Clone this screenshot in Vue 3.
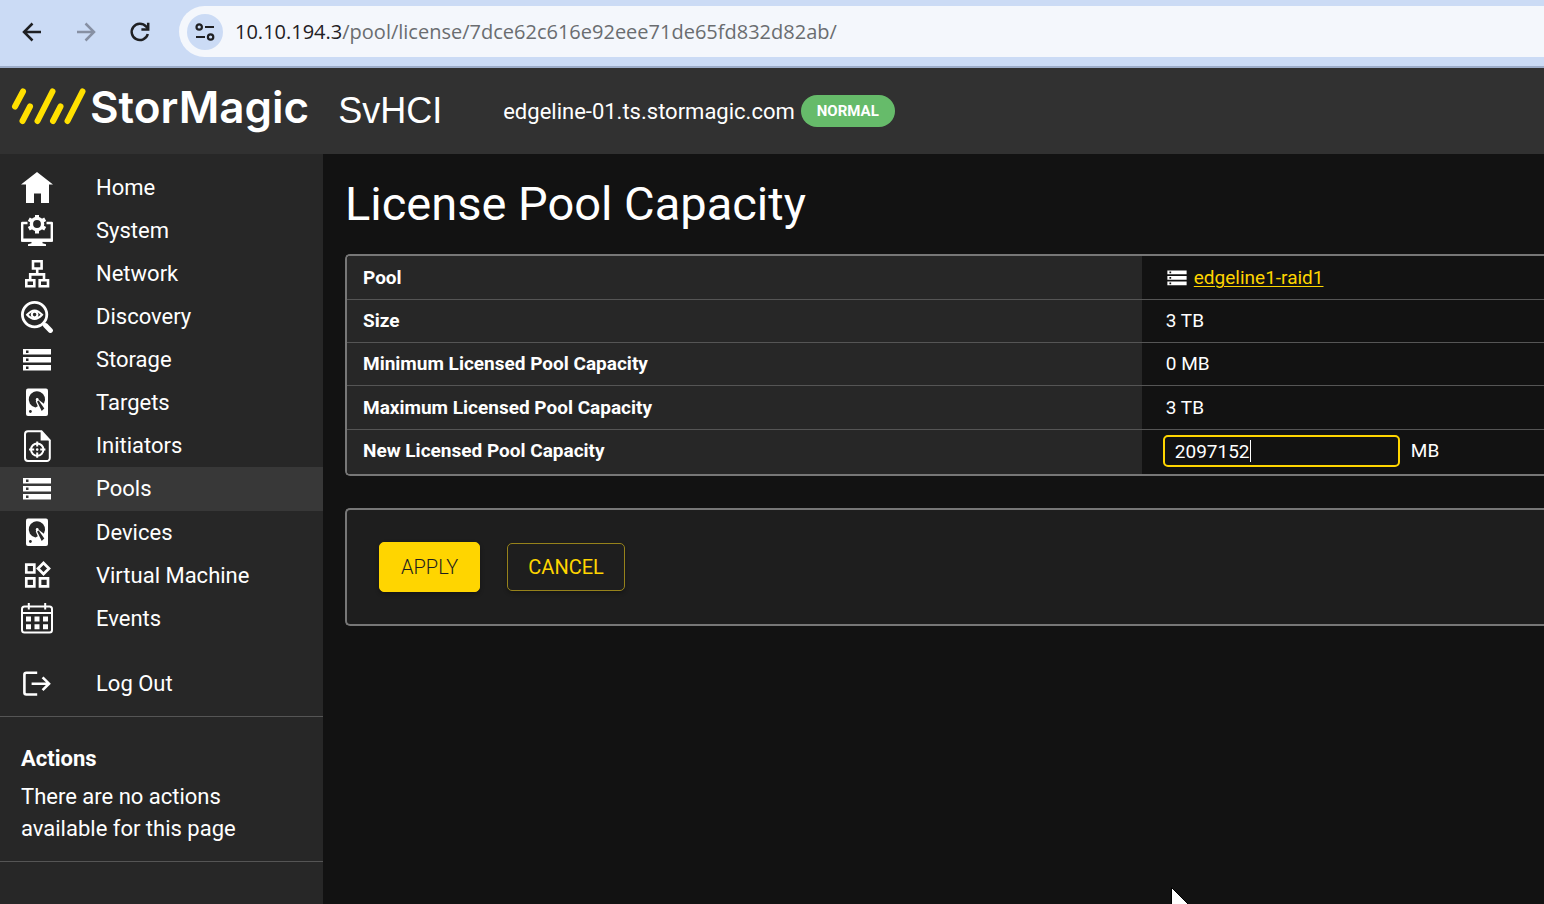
<script setup>
import { ref } from 'vue'

const capacity = ref('2097152')

const nav = [
  { label: 'Home', icon: 'home' },
  { label: 'System', icon: 'system' },
  { label: 'Network', icon: 'network' },
  { label: 'Discovery', icon: 'discovery' },
  { label: 'Storage', icon: 'storage' },
  { label: 'Targets', icon: 'disk' },
  { label: 'Initiators', icon: 'initiator' },
  { label: 'Pools', icon: 'storage', active: true },
  { label: 'Devices', icon: 'disk' },
  { label: 'Virtual Machine', icon: 'widgets' },
  { label: 'Events', icon: 'events' },
  { label: 'Log Out', icon: 'logout', separate: true },
]

const rows = [
  { label: 'Size', value: '3 TB' },
  { label: 'Minimum Licensed Pool Capacity', value: '0 MB' },
  { label: 'Maximum Licensed Pool Capacity', value: '3 TB' },
]
</script>

<template>
  <div class="page">
    <svg class="defs" width="0" height="0" aria-hidden="true">
      <symbol id="i-home" viewBox="0 0 32 32">
        <path fill="currentColor" d="M16 0 32 12.5H28V31H20V21.5H13V31H5V12.5H0Z" />
      </symbol>
      <symbol id="i-system" viewBox="0 0 32 32">
        <path fill="none" stroke="currentColor" stroke-width="2.4" stroke-linejoin="round" d="M6.500 8H1.200V25.600H30.800V8H25.500" />
        <path fill="currentColor" d="M0 23.500H32V25.800Q32 26.800 31 26.800H21.500V28.200L25 29.200V31H7V29.200L10.500 28.200V26.800H1Q0 26.800 0 25.800Z" />
        <circle cx="16" cy="9" r="5.600" fill="none" stroke="currentColor" stroke-width="3.400" />
        <g stroke="currentColor" stroke-width="4">
          <path d="M16 0V3.500M16 14.500V18.500M7.800 4.300 11 6.100M21 11.900 24.200 13.700M7.800 13.700 11 11.900M21 6.100 24.200 4.300" />
        </g>
      </symbol>
      <symbol id="i-network" viewBox="0 0 32 32">
        <path fill="none" stroke="currentColor" stroke-width="2.6" d="M12 3.3H20.6V10.5H12ZM5.3 22.3H13.3V28.3H5.3ZM18.7 22.3H27V28.3H18.7ZM16.2 10.5V16M9.2 22V16.4H23V22" />
      </symbol>
      <symbol id="i-discovery" viewBox="0 0 32 32">
        <circle cx="13.6" cy="13.6" r="12.2" fill="none" stroke="currentColor" stroke-width="2.8" />
        <path fill="none" stroke="currentColor" stroke-width="2.2" d="M6.2 13.8Q13.6 5.2 21 13.8Q13.6 22 6.2 13.8Z" />
        <circle cx="13.6" cy="13.6" r="2.8" fill="none" stroke="currentColor" stroke-width="2" />
        <path stroke="currentColor" stroke-width="5" stroke-linecap="round" d="m24.6 24.6 4.8 4.8" />
        <path stroke="currentColor" stroke-width="2.5" d="m21.8 21.8 3 3" />
      </symbol>
      <symbol id="i-storage" viewBox="0 0 32 32">
        <path fill="currentColor" fill-rule="evenodd" d="M2 5H30V10.400H2ZM5 6.400V9H7.500V6.400ZM2 13H30V18.400H2ZM5 14.400V17H7.500V14.400ZM2 21H30V26.400H2ZM5 22.400V25H7.500V22.400Z" />
      </symbol>
      <symbol id="i-disk" viewBox="0 0 32 32">
        <rect x="5" y="1.5" width="22" height="27.5" rx="2" fill="currentColor" />
        <path fill="#272727" d="M14.5 20.6A8.2 8.2 0 1 1 22.9 16.8L17.6 12.8 15.4 12.3 14.8 14.6 16.8 19.2Z" />
        <circle cx="16.2" cy="12.4" r="1.4" fill="currentColor" />
        <path fill="#272727" d="m16.1 14.4 1.6-.8 5.6 8-2.6 2.3Z" />
        <circle cx="9.4" cy="24.5" r="1.4" fill="#272727" />
      </symbol>
      <symbol id="i-initiator" viewBox="0 0 32 32">
        <path fill="none" stroke="currentColor" stroke-width="2" d="M20.5 1.2H7A3 3 0 0 0 4 4.2V28A3 3 0 0 0 7 31H25.8A3 3 0 0 0 28.8 28V10.4Z" />
        <path fill="currentColor" d="M19.6.8V10.6H29.6Z" />
        <circle cx="16.2" cy="19.6" r="6.2" fill="none" stroke="currentColor" stroke-width="2" />
        <path stroke="currentColor" stroke-width="2" d="M16.2 11.4V16.6M16.2 22.6V27.8M8 19.6H13.2M19.2 19.6H24.4" />
        <circle cx="16.2" cy="19.6" r="1.3" fill="currentColor" />
      </symbol>
      <symbol id="i-widgets" viewBox="0 0 32 32">
        <path fill="none" stroke="currentColor" stroke-width="2.7" d="M5.3 4.7H13.3V12.5H5.3ZM5.3 18.4H13.3V26.4H5.3ZM19 18.4H27V26.4H19ZM22.5 3 28 8.5 22.5 14 17 8.5Z" />
      </symbol>
      <symbol id="i-events" viewBox="0 0 32 32">
        <rect x="1" y="3.500" width="30" height="26" rx="2.5" fill="none" stroke="currentColor" stroke-width="2" />
        <path stroke="currentColor" stroke-width="2" d="M1 10H31M7.8 0V6.500M24.2 0V6.500" />
        <path fill="currentColor" d="M5 13.500H10V18.500H5ZM13.5 13.500H18.5V18.500H13.5ZM22 13.500H27V18.500H22ZM5 21.300H10V26.200H5ZM13.5 21.300H18.5V26.200H13.5ZM22 21.300H27V26.200H22Z" />
      </symbol>
      <symbol id="i-logout" viewBox="0 0 32 32">
        <path fill="none" stroke="currentColor" stroke-width="2.6" d="M16.2 4.7H5.4A2 2 0 0 0 3.4 6.7V24.5A2 2 0 0 0 5.4 26.5H16.2M10.6 15.7H28M21.6 9.3 28 15.7 21.6 22.1" />
      </symbol>
    </svg>

    <div class="browser">
      <button class="tool" type="button" aria-label="Back">
        <svg width="24" height="24" viewBox="0 0 24 24"><path fill="none" stroke="#1f2023" stroke-width="2.5" d="M21 12H4.5M12.5 3.5 4 12l8.5 8.5" /></svg>
      </button>
      <button class="tool" type="button" aria-label="Forward">
        <svg width="24" height="24" viewBox="0 0 24 24"><path fill="none" stroke="#8790a3" stroke-width="2.5" d="M3 12H19.5M11.5 3.5l8.5 8.5-8.5 8.5" /></svg>
      </button>
      <button class="tool" type="button" aria-label="Reload">
        <svg width="24" height="24" viewBox="0 0 24 24"><path fill="none" stroke="#1f2023" stroke-width="2.5" d="M19.8 14A8.2 8.2 0 1 1 18 6.4L20 8.6" /><path fill="none" stroke="#1f2023" stroke-width="2.5" d="M20.2 2.8V9.5H13.4" /></svg>
      </button>
      <div class="address">
        <button class="site" type="button" aria-label="Site information">
          <svg width="20" height="20" viewBox="0 0 20 20" fill="none" stroke="#1f2023" stroke-width="2.2"><circle cx="4.2" cy="5" r="2.7" /><path d="M10 5H19M1 15H10" /><circle cx="15.6" cy="15" r="2.7" /></svg>
        </button>
        <div class="url"><span class="host">10.10.194.3</span>/pool/license/7dce62c616e92eee71de65fd832d82ab/</div>
      </div>
    </div>

    <header class="top">
      <div class="brand">
        <svg width="76" height="40" viewBox="0 0 76 40" fill="none" stroke="#ffe000" stroke-width="6" stroke-linecap="round"><path d="M12 4.5 4 19.5M19 19.5 11.5 34M41.5 4.5 26.5 34M49.5 19.5 42 34M71.5 4.5 56.5 34" /></svg>
        <span class="wordmark">StorMagic</span>
      </div>
      <span class="product">SvHCI</span>
      <span class="machine">edgeline-01.ts.stormagic.com</span>
      <span class="status">NORMAL</span>
    </header>

    <div class="body">
      <aside class="side">
        <nav class="menu">
          <a v-for="item in nav" :key="item.label" href="#" class="item" :class="{ active: item.active, separate: item.separate }">
            <svg width="32" height="32"><use :href="'#i-' + item.icon" /></svg>
            <span>{{ item.label }}</span>
          </a>
        </nav>
        <section class="actions">
          <h2>Actions</h2>
          <p>There are no actions available for this page</p>
        </section>
      </aside>

      <main class="main">
        <h1>License Pool Capacity</h1>
        <table class="details">
          <tbody>
            <tr>
              <th scope="row">Pool</th>
              <td>
                <div class="cell pool">
                  <svg width="22" height="22"><use href="#i-storage" /></svg>
                  <a href="#">edgeline1-raid1</a>
                </div>
              </td>
            </tr>
            <tr v-for="row in rows" :key="row.label">
              <th scope="row">{{ row.label }}</th>
              <td>{{ row.value }}</td>
            </tr>
            <tr>
              <th scope="row"><label for="capacity">New Licensed Pool Capacity</label></th>
              <td class="entry">
                <div class="cell">
                  <span class="field"><input id="capacity" v-model="capacity" type="text" /><i class="caret"></i></span>
                  <span>MB</span>
                </div>
              </td>
            </tr>
          </tbody>
        </table>
        <div class="panel">
          <button class="apply" type="button">APPLY</button>
          <button class="cancel" type="button">CANCEL</button>
        </div>
      </main>
    </div>

    <svg class="pointer" width="20" height="17" viewBox="0 0 20 17"><path fill="#fff" stroke="#000" d="M1.5.5V19H20Z" /></svg>
  </div>
</template>

<style>
body {
  background: #121212;
}
</style>

<style scoped>
* {
  box-sizing: border-box;
}
.page {
  position: relative;
  display: flex;
  flex-direction: column;
  min-height: 100vh;
  overflow: hidden;
  background: #121212;
  color: #fff;
  font-family: Roboto, "Liberation Sans", sans-serif;
}
.defs {
  position: absolute;
}
button {
  font: inherit;
  cursor: pointer;
}
.browser {
  display: flex;
  align-items: center;
  gap: 30px;
  padding: 6px 0 9px 20px;
  background: #cbdbf5;
  border-bottom: 2px solid #9dadc9;
}
.tool {
  display: flex;
  padding: 0;
  border: 0;
  background: none;
}
.address {
  flex: 1;
  display: flex;
  align-items: center;
  gap: 12px;
  margin-left: -3px;
  padding: 8px 8px 7px;
  border-radius: 26px 0 0 26px;
  background: #f4f7fc;
}
.address .site {
  display: flex;
  padding: 8px;
  border: 0;
  border-radius: 50%;
  background: #cbdbf5;
}
.url {
  color: #6a6d70;
  font: 20px/28px "Open Sans", "Noto Sans", sans-serif;
}
.host {
  color: #1f2023;
}
.top {
  display: flex;
  align-items: center;
  padding: 13px 11px;
  background: #313131;
}
.brand {
  display: flex;
  align-items: center;
  gap: 3px;
  padding-bottom: 8px;
}
.wordmark {
  font: 600 44px/52px Inter, "Liberation Sans", sans-serif;
}
.product {
  margin-left: 29px;
  font: 36px/60px "Liberation Sans", Arial, sans-serif;
}
.machine {
  margin-left: 61px;
  font-size: 22px;
}
.status {
  margin-left: 6px;
  padding: 0 16px;
  border-radius: 16px;
  background: #66bb6a;
  font-size: 15px;
  font-weight: 700;
  line-height: 32px;
}
.body {
  flex: 1;
  display: flex;
}
.side {
  flex: none;
  width: 323px;
  background: #272727;
}
.menu {
  display: flex;
  flex-direction: column;
  padding: 12px 0 11px;
  border-bottom: 1px solid #555;
}
.item {
  display: flex;
  align-items: center;
  gap: 43px;
  padding: 0 21px;
  color: #fff;
  font-size: 22px;
  line-height: 43px;
  text-decoration: none;
}
.item.active {
  background: #383838;
  line-height: 44px;
}
.item.separate {
  margin-top: 22px;
}
.actions {
  padding: 26px 21px 16px;
  border-bottom: 1px solid #555;
  font-size: 22px;
  line-height: 32px;
}
.actions h2 {
  margin: 0 0 6px;
  font-size: 22px;
  font-weight: 700;
}
.actions p {
  margin: 0;
}
.main {
  flex: 1;
  padding-left: 22px;
}
h1 {
  margin: 0;
  padding: 20px 0;
  font-size: 47px;
  font-weight: 400;
  line-height: 60px;
}
.details {
  width: 100%;
  border: 2px solid #777;
  border-right: 0;
  border-radius: 5px 0 0 5px;
  border-spacing: 0;
  overflow: hidden;
  font-size: 19px;
}
th,
td {
  padding: 0 16px;
  border-bottom: 1px solid #555;
  text-align: left;
  line-height: 42px;
}
tr:first-child > *,
tr:nth-child(4) > * {
  line-height: 43px;
}
tr:last-child > * {
  padding-bottom: 2px;
  border-bottom: 0;
}
th {
  width: 66.4%;
  background: #272727;
  font-weight: 700;
}
td {
  padding-left: 24px;
}
td.entry {
  padding-left: 21px;
}
.cell {
  display: flex;
  align-items: center;
  gap: 11px;
}
.pool {
  gap: 6px;
}
.pool a {
  color: #ffd500;
  text-decoration-thickness: 1px;
  text-underline-offset: 2px;
}
.field {
  position: relative;
  display: flex;
}
input {
  width: 237px;
  height: 32px;
  padding: 0 10px;
  border: 2px solid #ffd500;
  border-radius: 5px;
  outline: 0;
  background: #121212;
  color: #fff;
  font: 19px/28px Roboto, "Liberation Sans", sans-serif;
}
.caret {
  position: absolute;
  top: 5px;
  left: 87px;
  width: 1px;
  height: 22px;
  background: #fff;
}
.panel {
  display: flex;
  align-items: center;
  gap: 27px;
  margin-top: 32px;
  padding: 32px;
  border: 2px solid #777;
  border-right: 0;
  border-radius: 5px 0 0 5px;
  background: #1e1e1e;
}
.panel button {
  padding: 0 20px;
  border: 1px solid #96821b;
  border-radius: 5px;
  background: none;
  color: #ffd500;
  font-size: 20px;
  line-height: 46px;
  box-shadow: 0 2px 4px rgba(0, 0, 0, 0.3);
}
.panel .apply {
  padding: 0 21px;
  border-color: #ffd500;
  background: #ffd500;
  color: #1e1e1e;
  font-weight: 300;
  line-height: 48px;
}
.pointer {
  position: absolute;
  left: 1170px;
  bottom: 0;
}
</style>
